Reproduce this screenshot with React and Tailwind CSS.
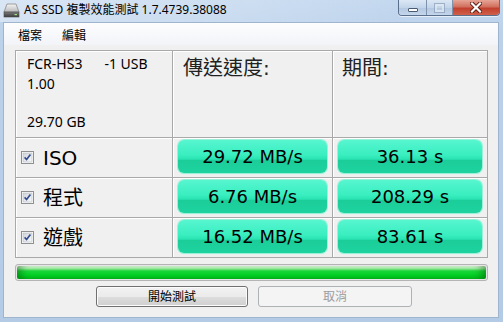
function DriveIcon() {
  return (
    <svg width="17" height="16" viewBox="0 0 17 16" className="shrink-0">
      <defs>
        <linearGradient id="dtop" x1="0" y1="0" x2="0" y2="1">
          <stop offset="0" stopColor="#f4f4f4" />
          <stop offset="1" stopColor="#b9b9b9" />
        </linearGradient>
        <linearGradient id="dbot" x1="0" y1="0" x2="0" y2="1">
          <stop offset="0" stopColor="#7a7a7a" />
          <stop offset="1" stopColor="#3c3c3c" />
        </linearGradient>
      </defs>
      <polygon points="4,2 13,2 16,10 1,10" fill="url(#dtop)" stroke="#8a8a8a" strokeWidth="0.8" />
      <rect x="1" y="10" width="15" height="5" fill="url(#dbot)" stroke="#4a4a4a" strokeWidth="0.6" />
      <rect x="11.5" y="12" width="2.5" height="1.2" fill="#9be07a" />
    </svg>
  );
}

function CheckBox() {
  return (
    <svg width="13" height="13" viewBox="0 0 13 13" className="shrink-0">
      <defs>
        <linearGradient id="cb" x1="0" y1="0" x2="1" y2="1">
          <stop offset="0" stopColor="#cfd3d8" />
          <stop offset="1" stopColor="#fbfbfb" />
        </linearGradient>
      </defs>
      <rect x="0.5" y="0.5" width="12" height="12" fill="#fff" stroke="#8e8f8f" />
      <rect x="2" y="2" width="9" height="9" fill="url(#cb)" stroke="#b6b9bd" strokeWidth="0.6" />
      <path d="M3.6 6.4 L5.6 8.6 L9.4 3.6" fill="none" stroke="#2f4a8f" strokeWidth="1.6" />
    </svg>
  );
}

function Badge({ children }) {
  return (
    <div className="h-[33px] w-full rounded-[6px] shadow-[0_0_0_1px_#9af1d8,0_1px_1px_#b6f3e0] bg-[linear-gradient(to_bottom,#56f6d0_0%,#3aeec0_45%,#2ae4b2_58%,#1bcd99_62%,#1ed3a0_100%)] flex items-center justify-center text-[18px] leading-none text-black font-['DejaVu_Sans','Noto_Sans_CJK_TC',sans-serif]">
      {children}
    </div>
  );
}

function Cell({ className = "", children }) {
  return (
    <div className={"bg-[#f0f0f0] shadow-[inset_1px_1px_0_#ffffff] " + className}>{children}</div>
  );
}

function RowLabel({ label }) {
  return (
    <Cell className="flex items-center pl-[5px]">
      <CheckBox />
      <span className="ml-[9px] text-[20px] leading-none text-black font-['DejaVu_Sans','Noto_Sans_CJK_TC',sans-serif]">
        {label}
      </span>
    </Cell>
  );
}

function ResultCell({ value }) {
  return (
    <Cell className="px-[5px] pt-[2px]">
      <Badge>{value}</Badge>
    </Cell>
  );
}

export default function App() {
  const rows = [
    ["ISO", "29.72 MB/s", "36.13 s"],
    ["程式", "6.76 MB/s", "208.29 s"],
    ["遊戲", "16.52 MB/s", "83.61 s"],
  ];
  return (
    <div className="w-[503px] h-[322px] overflow-hidden flex flex-col bg-[linear-gradient(to_bottom,#c4d8ef_0%,#bcd2eb_10%,#b4cbe6_100%)] font-['Noto_Sans','Noto_Sans_CJK_TC',sans-serif]">
      {/* Title bar */}
      <div className="h-[22px] shrink-0 flex items-start bg-[linear-gradient(to_right,rgba(255,255,255,0.35),rgba(255,255,255,0.15)_50%,rgba(255,255,255,0)_80%)]">
        <div className="flex items-center pl-[3px] pt-[2px]">
          <DriveIcon />
          <span className="ml-[4px] text-[12px] leading-[16px] text-black whitespace-nowrap">
            AS SSD 複製效能測試 1.7.4739.38088
          </span>
        </div>
        <div className="ml-auto mr-[3px] flex h-[16px] rounded-b-[4px] border border-t-0 border-[#5a6f8c] overflow-hidden shadow-[0_1px_0_rgba(255,255,255,0.6)]">
          <div className="w-[28px] h-full flex items-end justify-center pb-[3px] bg-[linear-gradient(to_bottom,#dce7f4,#c3d5ea_50%,#b2c7e0_51%,#c4d6eb)] border-r border-[#7e92ad]">
            <div className="w-[10px] h-[4px] bg-white border border-[#4a5a72] rounded-[1px]" />
          </div>
          <div className="w-[26px] h-full flex items-center justify-center bg-[linear-gradient(to_bottom,#dce7f4,#c3d5ea_50%,#b2c7e0_51%,#c4d6eb)] border-r border-[#7e92ad]">
            <div className="w-[9px] h-[8px] border-[2px] border-[#e4ecf6] outline outline-1 outline-[#8a9cb5] opacity-70" />
          </div>
          <div className="w-[46px] h-full flex items-center justify-center bg-[linear-gradient(to_bottom,#e6a596,#d2705e_45%,#c2402d_55%,#d0604c)]">
            <svg width="12" height="11" viewBox="0 0 12 11">
              <path d="M2 1.5 L10 9.5 M10 1.5 L2 9.5" stroke="#5a1a12" strokeWidth="4" strokeLinecap="square" />
              <path d="M2 1.5 L10 9.5 M10 1.5 L2 9.5" stroke="#ffffff" strokeWidth="2.2" strokeLinecap="square" />
            </svg>
          </div>
        </div>
      </div>

      {/* Client area */}
      <div className="ml-[3px] mr-[4px] mb-[4px] flex-1 flex flex-col border border-[#9fb4cf] bg-[#f0f0f0]">
        {/* Menu */}
        <div className="h-[22px] shrink-0 flex items-center pt-[3px] bg-[linear-gradient(to_bottom,#fdfdfe,#f2f4f8)] text-[12px] leading-none text-black">
          <span className="ml-[14px]">檔案</span>
          <span className="ml-[20px]">編輯</span>
        </div>

        {/* Content */}
        <div className="flex-1 flex flex-col pl-[11px] pt-[5px]">
          <div className="w-[473px] grid grid-cols-[156px_159px_154px] grid-rows-[86px_39px_39px_39px] gap-px p-px bg-[#a9a9a9]">
            <Cell className="pl-[11px] pt-[3px] text-[14px] leading-[20px] text-black">
              <div className="whitespace-pre">FCR-HS3<span className="ml-[22px]">-1 USB</span></div>
              <div>1.00</div>
              <div className="mt-[18px]">29.70 GB</div>
            </Cell>
            <Cell className="pl-[10px] pt-[5px]">
              <span className="text-[20px] leading-[24px] text-[#222] font-['DejaVu_Sans','Noto_Sans_CJK_TC',sans-serif]">傳送速度:</span>
            </Cell>
            <Cell className="pl-[9px] pt-[5px]">
              <span className="text-[20px] leading-[24px] text-[#222] font-['DejaVu_Sans','Noto_Sans_CJK_TC',sans-serif]">期間:</span>
            </Cell>
            {rows.map(([label, speed, time]) => (
              <>
                <RowLabel key={label + "l"} label={label} />
                <ResultCell key={label + "s"} value={speed} />
                <ResultCell key={label + "t"} value={time} />
              </>
            ))}
          </div>

          {/* Progress bar */}
          <div className="mt-[6px] w-[473px] h-[17px] rounded-[3px] border border-[#b4b4b4] p-px bg-[#e6e6e6]">
            <div className="w-full h-full rounded-[2px] bg-[linear-gradient(to_bottom,#d6f6d6_0%,#a8eca8_18%,#1cd63a_38%,#00d024_70%,#00b81c_100%)] shadow-[inset_10px_0_8px_-6px_rgba(0,70,0,0.45),inset_-10px_0_8px_-6px_rgba(0,70,0,0.45)]" />
          </div>

          {/* Buttons */}
          <div className="mt-[5px] flex pl-[81px] gap-[10px]">
            <div className="w-[152px] h-[21px] rounded-[3px] border border-[#707070] shadow-[inset_0_0_0_1px_#fcfcfc] bg-[linear-gradient(to_bottom,#f2f2f2_0%,#ebebeb_50%,#dddddd_51%,#cfcfcf_100%)] flex items-center justify-center text-[12px] leading-none text-black">
              開始測試
            </div>
            <div className="w-[154px] h-[21px] rounded-[3px] border border-[#adb2b5] bg-[#f4f4f4] flex items-center justify-center text-[12px] leading-none text-[#9c9c9c]">
              取消
            </div>
          </div>
        </div>
      </div>
    </div>
  );
}
